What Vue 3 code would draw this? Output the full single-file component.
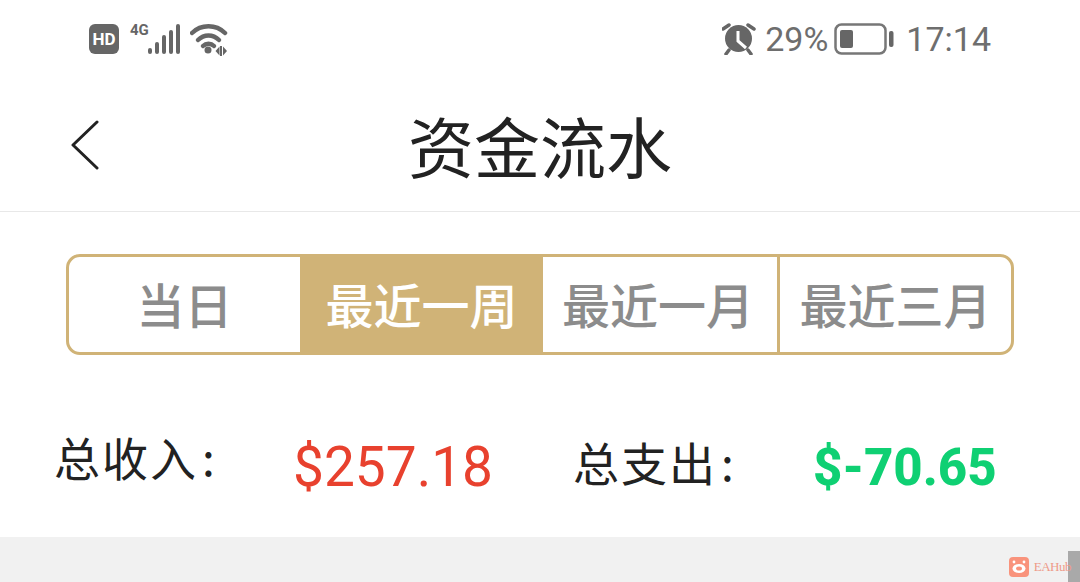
<script setup>
const tabs = [
  { label: "当日", width: 231 },
  { label: "最近一周", width: 243, active: true },
  { label: "最近一月", width: 237, plain: true },
  { label: "最近三月", width: 231 },
];
</script>

<template>
  <main class="page">
    <div class="status">
      <div class="status-left">
        <span class="hd">HD</span>
        <span class="net">4G</span>
        <svg class="signal" width="33" height="32" viewBox="0 0 33 32">
          <rect x="0" y="25" width="4" height="6" rx="2" />
          <rect x="7" y="19" width="4" height="12" rx="2" />
          <rect x="14" y="12" width="4" height="19" rx="2" />
          <rect x="21" y="7" width="4" height="24" rx="2" />
          <rect x="28" y="1" width="4" height="30" rx="2" />
        </svg>
        <svg class="wifi" width="40" height="34" viewBox="0 0 40 34">
          <path d="M2 11C11 2 26 2 35 11" />
          <path d="M8 18C14 12 23 12 29 18" />
          <path d="M13 24C16 21 21 21 24 24" />
          <circle cx="18" cy="28" r="3.5" class="solid" />
          <path class="solid" d="M25.5 29l4-4.5v9zM30 24h2v10h-2zM33 24.5l4 4.5-4 4.5z" />
        </svg>
      </div>
      <div class="status-right">
        <svg class="alarm" width="34" height="32" viewBox="0 0 34 32">
          <circle cx="16.5" cy="15.5" r="13.5" class="solid" />
          <path class="hand" d="M16 8v10l8 7" />
          <path class="ear" d="M1 6l6-4M32 6l-6-4M7 27l-3 4M26 27l3 4" />
        </svg>
        <span class="pct">29%</span>
        <svg class="battery" width="60" height="34" viewBox="0 0 60 34">
          <rect x="1.5" y="2.5" width="50" height="29" rx="6" class="shell" />
          <rect x="6" y="8" width="13" height="18" rx="2" class="solid" />
          <rect x="55" y="9" width="4.5" height="16" rx="2" class="solid" />
        </svg>
        <span class="time">17:14</span>
      </div>
    </div>

    <header class="nav">
      <svg class="back" width="30" height="50" viewBox="0 0 30 50">
        <path d="M27 2L3 25l24 23" />
      </svg>
      <h1>资金流水</h1>
    </header>

    <div class="tabs">
      <div
        v-for="tab in tabs"
        :key="tab.label"
        class="tab"
        :class="{ active: tab.active, plain: tab.plain }"
        :style="{ width: tab.width + 'px' }"
      >
        {{ tab.label }}
      </div>
    </div>

    <section class="totals">
      <span class="label income-label">总收入<i>:</i></span>
      <span class="income">$257.18</span>
      <span class="label spend-label">总支出<i>:</i></span>
      <span class="spend">$-70.65</span>
    </section>

    <footer class="band">
      <div class="scroll"></div>
      <div class="mark">
        <svg width="20" height="20" viewBox="0 0 20 20">
          <rect width="20" height="20" rx="4" fill="#f9937c" />
          <ellipse cx="10" cy="11.5" rx="6.5" ry="4.5" fill="#fff" />
          <ellipse cx="10" cy="11.5" rx="3" ry="2" fill="#f9937c" />
          <circle cx="5" cy="5" r="1.4" fill="#fff" />
          <circle cx="15" cy="5" r="1.4" fill="#fff" />
        </svg>
        <span>EAHub</span>
      </div>
    </footer>
  </main>
</template>

<style scoped>
.page {
  width: 1080px;
  height: 582px;
  overflow: hidden;
  background: #fff;
  display: flex;
  flex-direction: column;
  font-family: "Noto Sans CJK SC", "Noto Sans", sans-serif;
}

.status {
  height: 78px;
  padding: 0 89px;
  display: flex;
  justify-content: space-between;
  align-items: center;
  color: #666;
}

.status-left,
.status-right {
  display: flex;
  align-items: center;
}

.hd {
  width: 30px;
  height: 30px;
  border-radius: 6px;
  background: #666;
  color: #fff;
  font: 700 17px/30px "Roboto", sans-serif;
  text-align: center;
}

.net {
  width: 18px;
  margin: -17px 0 0 11px;
  font: 700 15px/1 "Roboto", sans-serif;
}

.signal {
  margin-left: 0;
  fill: #666;
}

.wifi {
  margin-left: 9px;
  fill: none;
  stroke: #666;
  stroke-width: 4.5;
  stroke-linecap: round;
}

.wifi .solid,
.alarm .solid,
.battery .solid {
  fill: #666;
  stroke: none;
}

.alarm .hand {
  fill: none;
  stroke: #fff;
  stroke-width: 3;
}

.alarm .ear {
  fill: none;
  stroke: #666;
  stroke-width: 3.5;
  stroke-linecap: round;
}

.pct,
.time {
  font: 400 34px/1 "Roboto", sans-serif;
  color: #6e6e6e;
}

.pct {
  margin: 0 6px 0 9px;
}

.battery .shell {
  fill: none;
  stroke: #777;
  stroke-width: 2.5;
}

.time {
  margin-left: 12px;
}

.nav {
  position: relative;
  height: 133px;
  border-bottom: 1px solid #e8e8e8;
  display: flex;
  align-items: center;
  justify-content: center;
}

.back {
  position: absolute;
  left: 70px;
  top: 42px;
  fill: none;
  stroke: #222;
  stroke-width: 3;
  stroke-linecap: round;
  stroke-linejoin: round;
}

.nav h1 {
  margin: 0 0 2px;
  font-size: 66px;
  font-weight: 400;
  line-height: 1;
  color: #222;
}

.tabs {
  box-sizing: border-box;
  width: 948px;
  height: 101px;
  margin: 42px 0 0 66px;
  display: flex;
  border: 3px solid #d0b377;
  border-radius: 14px;
  overflow: hidden;
}

.tab {
  box-sizing: border-box;
  display: flex;
  align-items: center;
  justify-content: center;
  flex: none;
  padding-bottom: 4px;
  font-size: 48px;
  font-weight: 500;
  color: #8c8c8c;
}

.tab.plain {
  padding-right: 4px;
  border-right: 3px solid #d0b377;
}

.tab.active {
  background: #d0b377;
  color: #fff;
}

.totals {
  height: 182px;
  box-sizing: border-box;
  padding: 42px 0 0 54px;
  display: grid;
  grid-template-columns: 239px 280px 240px 1fr;
  align-items: center;
}

.label {
  font-size: 46px;
  letter-spacing: 2px;
  color: #222;
}

.label i {
  margin-left: 4px;
  font-style: normal;
}

.income-label {
  margin-top: -22px;
}

.spend-label {
  margin-top: -12px;
}

.income {
  font: 400 55px/1 "Roboto", sans-serif;
  color: #e8412e;
}

.spend {
  font: 800 51px/1 "Roboto", sans-serif;
  color: #0fd073;
}

.band {
  position: relative;
  flex: 1;
  background: #f1f1f1;
  display: flex;
  justify-content: flex-end;
  align-items: flex-end;
}

.mark {
  position: absolute;
  right: 9px;
  bottom: 5px;
  display: flex;
  align-items: center;
  gap: 5px;
  color: #ee9a88;
  font: 400 13px/20px "Liberation Serif", serif;
  letter-spacing: -0.5px;
}

.scroll {
  width: 12px;
  height: 31px;
  background: #a9a9a9;
}
</style>
